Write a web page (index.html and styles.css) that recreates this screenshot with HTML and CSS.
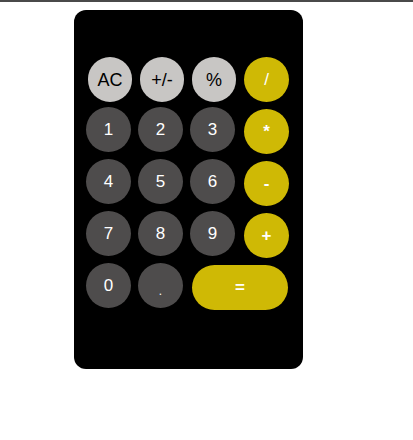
FILE: index.html
```html
<!DOCTYPE html>
<html>
<head>
<meta charset="utf-8">
<link rel="stylesheet" href="styles.css">
</head>
<body>
<div class="topline"></div>
<div class="calc">
  <div class="keys">
    <button class="key light">AC</button>
    <button class="key light">+/-</button>
    <button class="key light">%</button>
    <button class="key op slash">/</button>
    <button class="key dark">1</button>
    <button class="key dark">2</button>
    <button class="key dark">3</button>
    <button class="key op">*</button>
    <button class="key dark">4</button>
    <button class="key dark">5</button>
    <button class="key dark">6</button>
    <button class="key op">-</button>
    <button class="key dark">7</button>
    <button class="key dark">8</button>
    <button class="key dark">9</button>
    <button class="key op">+</button>
    <button class="key dark">0</button>
    <button class="key dark dot">.</button>
    <button class="key op equals">=</button>
  </div>
</div>
</body>
</html>
```
FILE: styles.css
```css
html, body {
  margin: 0;
  padding: 0;
  background: #ffffff;
  font-family: "Liberation Sans", Arial, sans-serif;
}
.topline {
  height: 2px;
  background: #4a4a4a;
}
.calc {
  margin: 8px 0 0 74px;
  width: 229px;
  height: 359px;
  background: #000000;
  border-radius: 12px;
  box-sizing: border-box;
  padding: 45px 0 0 12px;
}
.keys {
  display: grid;
  grid-template-columns: repeat(4, 45px);
  grid-auto-rows: 45px;
  gap: 7px;
}
.key {
  width: 45px;
  height: 45px;
  border: none;
  border-radius: 23px;
  padding: 0;
  font-family: "Liberation Sans", Arial, sans-serif;
  font-size: 17px;
  display: flex;
  align-items: center;
  justify-content: center;
  line-height: 1;
}
.light {
  background: #c8c6c4;
  color: #000000;
  margin: 2px 0 0 2px;
  width: 44px;
  font-size: 18px;
}
.dark {
  background: #4e4c4c;
  color: #ffffff;
}
.op {
  background: #cfb905;
  color: #ffffff;
  font-weight: bold;
  margin: 2px 0 0 2px;
}
.slash {
  font-weight: normal;
}
.dot {
  padding-top: 10px;
  font-size: 12px;
}
.equals {
  grid-column: span 2;
  width: 96px;
}
```
